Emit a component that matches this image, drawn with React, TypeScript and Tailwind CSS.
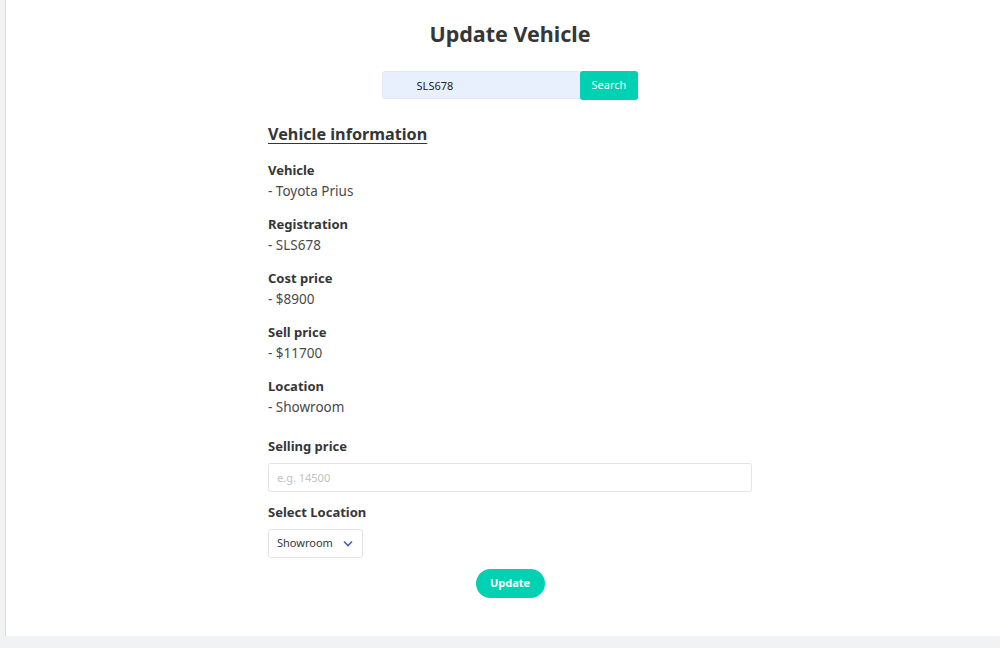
const details = [
  { label: "Vehicle", value: "- Toyota Prius" },
  { label: "Registration", value: "- SLS678" },
  { label: "Cost price", value: "- $8900" },
  { label: "Sell price", value: "- $11700" },
  { label: "Location", value: "- Showroom" },
];

const App = () => {
  return (
    <div
      className="w-[1000px] h-[648px] bg-[#f1f2f4] flex flex-col"
      style={{ fontFamily: '"Noto Sans", "Open Sans", sans-serif' }}
    >
      <div className="ml-[5px] h-[636px] bg-white border-l border-[#dcdcdc] pl-[14px]">
        <div className="flex flex-col items-center pt-[18px]">
          <h1 className="text-[21.5px] leading-[32px] font-bold text-[#363636]">Update Vehicle</h1>
          <div className="flex mt-[21px]">
            <input
              defaultValue="SLS678"
              className="w-[199px] h-[28px] bg-[#e8f0fe] rounded-l-[3px] border border-[#e3e8f0] pl-[34px] text-[11px] text-[#222] outline-none"
            />
            <button className="h-[29px] px-[12px] bg-[#00d1b2] text-white text-[11px] rounded-[3px] -ml-px">
              Search
            </button>
          </div>
        </div>

        <div className="w-[484px] mx-auto mt-[22px] text-[#363636]">
          <h2 className="text-[16.2px] leading-[24px] font-bold underline underline-offset-[3px]">
            Vehicle information
          </h2>
          <div className="mt-[14px] flex flex-col gap-[12px]">
            {details.map((d) => (
              <div key={d.label}>
                <div className="text-[13px] leading-[20px] font-bold">{d.label}</div>
                <div className="text-[13.5px] leading-[22px] text-[#4a4a4a]">{d.value}</div>
              </div>
            ))}
          </div>

          <div className="mt-[18px] text-[13px] leading-[20px] font-bold">Selling price</div>
          <input
            placeholder="e.g. 14500"
            className="mt-[7px] w-full h-[29px] border border-[#e4e4e4] rounded-[3px] px-[8px] text-[11px] placeholder:text-[#c2c2c2] outline-none"
          />
          <div className="mt-[10px] text-[13px] leading-[20px] font-bold">Select Location</div>
          <div className="mt-[7px] w-[95px] h-[29px] border border-[#e4e4e4] rounded-[3px] flex items-center justify-between pl-[8px] pr-[9px]">
            <span className="text-[11px] text-[#363636]">Showroom</span>
            <svg width="10" height="7" viewBox="0 0 10 7" fill="none">
              <path d="M1 1.5l4 4 4-4" stroke="#485fc7" strokeWidth="1.6" />
            </svg>
          </div>
          <div className="flex justify-center mt-[11px]">
            <button className="h-[29px] w-[69px] rounded-full bg-[#00d1b2] text-white text-[11px] font-bold">
              Update
            </button>
          </div>
        </div>
      </div>
    </div>
  );
};

export default App;
